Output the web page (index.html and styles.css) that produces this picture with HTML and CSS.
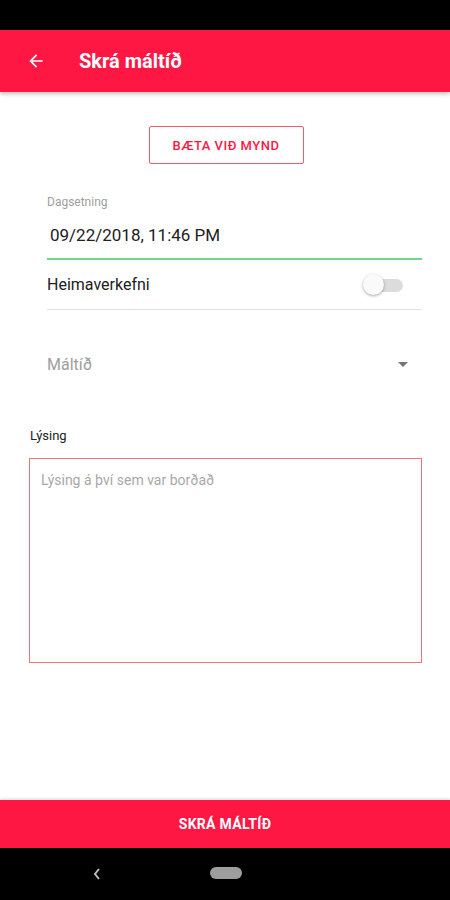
FILE: index.html
```html
<!DOCTYPE html>
<html lang="is">
<head>
<meta charset="utf-8">
<link rel="stylesheet" href="styles.css">
</head>
<body>
<div class="screen">
  <div class="statusbar"></div>
  <header class="appbar">
    <svg class="back" width="20" height="20" viewBox="0 0 24 24"><path d="M20 11H7.83l5.59-5.59L12 4l-8 8 8 8 1.41-1.41L7.83 13H20v-2z" fill="#fff"/></svg>
    <h1 class="title">Skrá máltíð</h1>
  </header>
  <main class="content">
    <div class="photo-row"><button class="photo-btn">BÆTA VIÐ MYND</button></div>
    <div class="date-field">
      <div class="date-label">Dagsetning</div>
      <div class="date-value">09/22/2018, 11:46 PM</div>
    </div>
    <div class="switch-row">
      <span class="switch-label">Heimaverkefni</span>
      <span class="switch"><span class="track"></span><span class="thumb"></span></span>
    </div>
    <div class="select-row">
      <span class="select-label">Máltíð</span>
      <svg class="caret" width="10" height="5" viewBox="0 0 10 5"><path d="M0 0h10L5 5z" fill="#757575"/></svg>
    </div>
    <div class="desc-label">Lýsing</div>
    <div class="desc-box"><span class="placeholder">Lýsing á því sem var borðað</span></div>
  </main>
  <div class="submit">SKRÁ MÁLTÍÐ</div>
  <nav class="navbar">
    <svg class="nav-back" width="10" height="14" viewBox="0 0 10 14"><path d="M7 2L3 7l4 5" stroke="#bdbdbd" stroke-width="2" fill="none"/></svg>
    <span class="pill"></span>
  </nav>
</div>
</body>
</html>
```

FILE: styles.css
```css
* { box-sizing: border-box; }
html, body { margin: 0; padding: 0; }
body { font-family: Roboto, "Noto Sans", sans-serif; background: #fff; }
.screen { width: 450px; height: 900px; display: flex; flex-direction: column; overflow: hidden; }
.statusbar { height: 30px; background: #000; flex: none; }
.appbar {
  height: 62px; flex: none; background: #ff1744; display: flex; align-items: center;
  padding-left: 26px; box-shadow: 0 2px 4px rgba(0,0,0,0.25); position: relative; z-index: 1;
}
.back { flex: none; }
.title { margin: 0 0 0 33px; color: #fff; font-size: 20px; font-weight: 700; letter-spacing: 0; }
.content { flex: 1; display: flex; flex-direction: column; }
.photo-row { display: flex; justify-content: center; padding-top: 34px; padding-left: 2px; }
.photo-btn {
  width: 155px; height: 38px; border: 1px solid #f4596d; border-radius: 2px; background: #fff;
  color: #ff1744; font-family: Roboto, sans-serif; font-size: 13px; font-weight: 500; letter-spacing: 0.5px; padding: 0;
}
.date-field { margin: 30px 28px 0 47px; border-bottom: 2px solid #6fd68f; padding-bottom: 13px; }
.date-label { font-size: 12px; color: #9e9e9e; line-height: 16px; }
.date-value { font-size: 17px; color: #212121; margin-top: 15px; padding-left: 3px; line-height: 20px; }
.switch-row {
  margin: 0 28px 0 47px; height: 50px; display: flex; align-items: center; justify-content: space-between;
  border-bottom: 1px solid #e3e3e3;
}
.switch-label { font-size: 16px; color: #212121; }
.switch { position: relative; width: 42px; height: 22px; margin-right: 17px; }
.track { position: absolute; left: 6px; top: 5px; width: 34px; height: 13px; border-radius: 7px; background: #dcdcdc; }
.thumb { position: absolute; left: 0; top: 0; width: 21px; height: 21px; border-radius: 50%; background: #fafafa; box-shadow: 0 1px 3px rgba(0,0,0,0.35); }
.select-row {
  margin: 38px 42px 0 47px; height: 32px; display: flex; align-items: center; justify-content: space-between;
}
.select-label { font-size: 16px; color: #9e9e9e; }
.desc-label { margin: 48px 0 0 30px; font-size: 13px; color: #212121; line-height: 16px; }
.desc-box { margin: 14px 28px 0 29px; height: 205px; border: 1px solid #f5707f; padding: 11px 0 0 11px; }
.placeholder { font-size: 14px; color: #a8a8a8; }
.submit {
  height: 48px; flex: none; background: #ff1744; color: #fff; font-size: 14px; font-weight: 700;
  display: flex; align-items: center; justify-content: center; letter-spacing: 0.3px;
  box-shadow: 0 -1px 3px rgba(0,0,0,0.15);
}
.navbar { height: 52px; flex: none; background: #000; display: flex; align-items: center; padding-left: 92px; }
.nav-back { flex: none; }
.pill { width: 32px; height: 12px; border-radius: 6px; background: #9e9e9e; margin-left: 108px; margin-top: -3px; }
```
